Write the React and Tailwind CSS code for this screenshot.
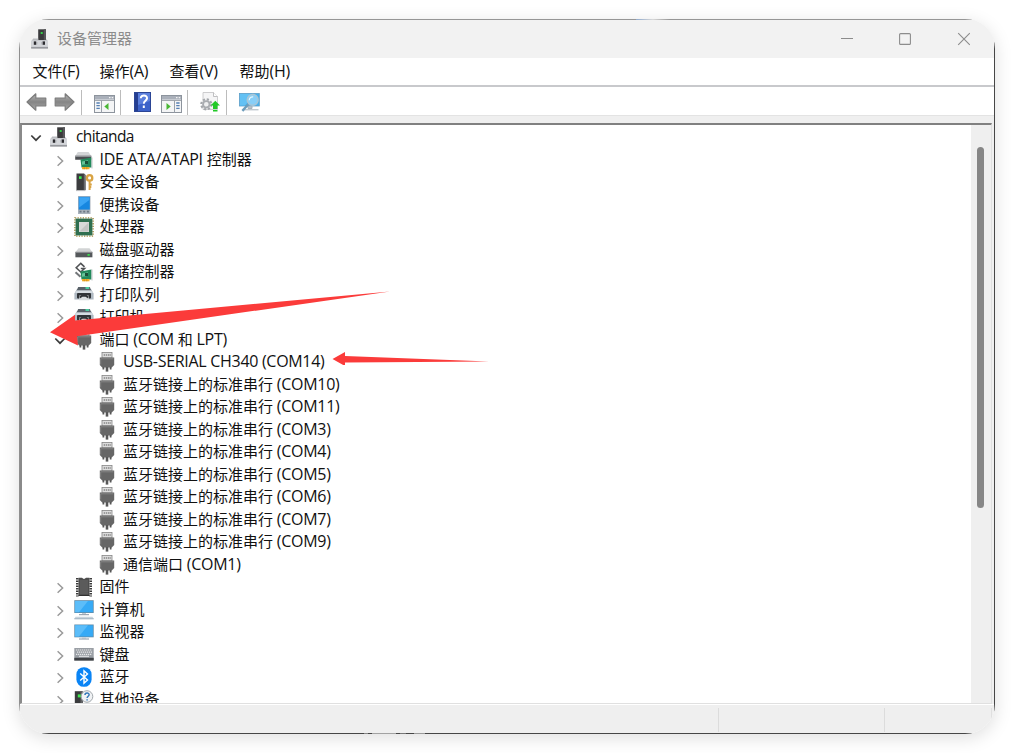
import React from 'react';

const Svg = ({ w = 20, h = 20, children }) => (
  <svg width={w} height={h} viewBox={`0 0 ${w} ${h}`} className="block shrink-0">{children}</svg>
);

const Machine = () => (
  <Svg>
    <rect x="8.2" y="0.3" width="7.8" height="11" fill="#3b3b3d" />
    <rect x="13.8" y="0.3" width="2.2" height="11" fill="#58585b" />
    <rect x="10.7" y="3" width="2" height="2" fill="#35d04a" />
    <path d="M3.2 9.5H8.2V11H16V9.8L18 12.5V19.5H1.2V12.5Z" fill="#b9bbbf" />
    <path d="M1.2 11.5H18V17.8H1.2Z" fill="#d4d6da" />
    <path d="M1.2 17.9H18V19.5H1.2Z" fill="#97999e" />
    <rect x="3.8" y="12.4" width="2.4" height="3.4" fill="#2c2c30" />
    <rect x="12.6" y="12.4" width="2.4" height="3.4" fill="#2c2c30" />
    <path d="M6.8 13V15.5M11.9 13V15.5" stroke="#9a9ca0" strokeWidth=".8" />
  </Svg>
);

const Card = () => (
  <g>
    <path d="M6.5 9.5L17.5 7.5V17.5H7.5Z" fill="#238a5c" />
    <path d="M18 7.5V18.5" stroke="#c3c6c8" strokeWidth="1" />
    <path d="M8 11.5L14 10.2V14L8 14.8Z" fill="#66c39a" />
    <rect x="11" y="11" width="3" height="3" fill="#1b4e38" />
    <path d="M8 17H15.5V19.3H8Z" fill="#f2ae2d" />
    <path d="M10.2 17.2V19.3M12.8 17.2V19.3" stroke="#c97f10" strokeWidth=".7" />
  </g>
);

const Ide = () => (
  <Svg>
    <path d="M3.8 2H14.5L17.3 6H1.2Z" fill="#d3d5d7" />
    <path d="M1.2 5.8H17.3V9.8H1.2Z" fill="#4c4e52" />
    <path d="M1.2 6.2H17.3" stroke="#aeb0b4" strokeWidth="1" />
    <Card />
  </Svg>
);

const Security = () => (
  <Svg>
    <path d="M2.5 1.5H10L11.5 3V18H2.5Z" fill="#3b3c3e" />
    <path d="M9.8 1.5L11.5 3V18H9.8Z" fill="#6b6d70" />
    <rect x="5" y="4.3" width="2.6" height="2.6" fill="#3df052" />
    <circle cx="15.6" cy="5.9" r="2.7" fill="#fff" stroke="#d9a445" strokeWidth="2.3" />
    <path d="M15.6 9V18M15.6 12.5H17.8M15.6 15H17.3" stroke="#d9a445" strokeWidth="2" />
    <path d="M2 18.6H11.5" stroke="#b5b7ba" />
  </Svg>
);

const Portable = () => (
  <Svg>
    <rect x="4" y="1" width="12.5" height="18" fill="#a9b2bc" />
    <rect x="4.7" y="1.8" width="11.1" height="12.8" fill="#1787e0" />
    <path d="M5.2 2.3H15.3V5L5.2 12.5Z" fill="#3ca5f4" />
    <path d="M5.5 16.6H7.5M9.2 16.6H11.2M12.9 16.6H14.9" stroke="#6d7885" strokeWidth="1.6" />
  </Svg>
);

const Cpu = () => (
  <Svg>
    <rect x="0.9" y="0.9" width="18.2" height="18.2" fill="none" stroke="#a58a3f" strokeWidth="1.4" strokeDasharray="1.3 1.3" />
    <rect x="1.6" y="1.6" width="16.8" height="16.8" fill="#2f6f50" />
    <rect x="5" y="5" width="10" height="10" fill="#d9dad9" />
    <path d="M5.5 14.5L14.5 5.5V14.5Z" fill="#c3c5c4" />
  </Svg>
);

const Disk = () => (
  <Svg>
    <path d="M4.5 8.3H15.5L18.2 12H1.6Z" fill="#d2d4d5" />
    <rect x="1.4" y="12" width="17" height="5.3" fill="#55585b" />
    <path d="M1.4 12.2H18.4" stroke="#a0a3a6" />
    <rect x="13.5" y="14" width="2.2" height="1.8" fill="#3be04d" />
  </Svg>
);

const Storage = () => (
  <Svg>
    <path d="M10.5 4.8L6.8 1.3L2.2 5.8L6.8 10L10.5 6.5H6.8" fill="none" stroke="#505255" strokeWidth="1.6" />
    <path d="M1.5 10.2L6.5 14.8" fill="none" stroke="#74777a" strokeWidth="2" />
    <Card />
  </Svg>
);

const Printer = () => (
  <Svg>
    <path d="M3 4H17L19.6 8.5V14.5H0.4V8.5Z" fill="#aeb8c1" />
    <path d="M4.2 2H15.8L17.3 5.5H2.7Z" fill="#596169" />
    <path d="M2.7 5.5H17.3L19 8H1Z" fill="#d5dce2" />
    <path d="M11.5 3H15.2" stroke="#49d7a4" strokeWidth="1.8" />
    <rect x="3" y="8" width="14" height="5.5" rx="1" fill="#303438" />
    <path d="M5.7 10H14.3L15.2 15.3H4.8Z" fill="#d8dde0" />
    <path d="M5.8 10.8L8 9.8H12L14.2 10.8V13.5L11.5 11.8H8.5L5.8 13.5Z" fill="#303438" />
  </Svg>
);

const Port = () => (
  <Svg>
    <rect x="5" y="0.5" width="10" height="5.5" fill="#dcdcdc" stroke="#858585" strokeWidth=".8" />
    <path d="M7.3 2V4M9.3 2V4M11.3 2V4M13.1 2V4" stroke="#777" strokeWidth=".8" />
    <path d="M2.8 5.6H17.2V13L14.8 15.4H5.2L2.8 13Z" fill="#666" />
    <path d="M3.5 6.8H16.5M3.7 7V12.5" stroke="#858585" strokeWidth="1" />
    <path d="M6.4 15V17.6M13.6 15V17.6" stroke="#575757" strokeWidth="1.8" />
    <path d="M10 15V19.6" stroke="#575757" strokeWidth="2.6" />
  </Svg>
);

const Firmware = () => (
  <Svg>
    <path d="M3.3 1V19.5M16.7 1V19.5" stroke="#3c3c3c" strokeWidth="2.6" strokeDasharray="1.5 1" />
    <path d="M4.5 0.8H8Q10 3 12 0.8H15.5V19H4.5Z" fill="#4d4d4d" />
    <path d="M6 3H14V17.5H6Z" fill="#5b5b5b" />
    <path d="M4.5 18.4H15.5" stroke="#2f2f2f" />
  </Svg>
);

const Screen = ({ y }) => (
  <g>
    <rect x="0.3" y={y} width="19.4" height="12.8" fill="#5f8ba8" />
    <rect x="1.1" y={y + 0.8} width="17.8" height="11.2" fill="#36aaf6" />
    <path d={`M1.1 ${y + 0.8}H14L5 ${y + 12}H1.1Z`} fill="#5cbdf9" />
    <path d={`M8 ${y + 12.8}H12V${y + 14}H8Z`} fill="#c3ccd4" />
    <path d={`M5 ${y + 14.5}H15`} stroke="#8796a4" strokeWidth="1" />
  </g>
);

const Computer = () => (
  <Svg>
    <Screen y={0.2} />
    <path d="M1.5 16.7H18.5L19.7 18.7H0.3Z" fill="#c8d3dc" />
    <path d="M0.3 18.8H19.7" stroke="#8ba1b3" strokeWidth=".8" />
  </Svg>
);

const Monitor = () => <Svg><Screen y={2.5} /></Svg>;

const Keyboard = () => (
  <Svg>
    <rect x="0.3" y="3" width="19.4" height="12.4" fill="#9a9fa5" />
    <rect x="0.3" y="12.8" width="19.4" height="2.8" fill="#3e4145" />
    <path d="M2 5H18M3 7.2H18M2 9.4H18" stroke="#e6e8ea" strokeWidth="1.2" strokeDasharray="1.3 .7" />
    <path d="M5 11.3H15" stroke="#e6e8ea" strokeWidth="1" />
  </Svg>
);

const Bluetooth = () => (
  <Svg>
    <rect x="2.4" y="0.2" width="15.2" height="19.6" rx="7.4" fill="#0a84f5" />
    <path d="M6.2 6.5L13.5 13L10 16.2V3.8L13.5 7L6.2 13.5" fill="none" stroke="#fff" strokeWidth="1.4" />
  </Svg>
);

const Unknown = () => (
  <Svg>
    <path d="M0.8 1.2H8V13H0.8Z" fill="#3a3b3d" />
    <path d="M6.5 1.2H9V13H6.5Z" fill="#606265" />
    <rect x="3.8" y="4.4" width="3" height="3" fill="#41e750" />
    <circle cx="13" cy="6.5" r="5.8" fill="#f0f2f4" stroke="#a2a8ad" strokeWidth="1" />
    <path d="M11 5.1C11 2.4 15.2 2.5 15.1 4.8C15 6.3 13.1 6.3 13.1 8.1M13.1 9.2V10.5" fill="none" stroke="#3478b8" strokeWidth="1.5" />
  </Svg>
);

const Arrow = ({ flip }) => (
  <svg width="21" height="20" viewBox="0 0 21 20" className={flip ? 'block -scale-x-100' : 'block'}>
    <defs>
      <linearGradient id={flip ? 'ga' : 'gb'} x1="0" y1="0" x2="0" y2="1">
        <stop offset="0" stopColor="#b5b5b5" />
        <stop offset=".5" stopColor="#858585" />
        <stop offset="1" stopColor="#a8a8a8" />
      </linearGradient>
    </defs>
    <path d="M1 10L9.8 1.8V6.2H19.8V13.8H9.8V18.2Z" fill={`url(#${flip ? 'ga' : 'gb'})`} stroke="#7d7d7d" strokeWidth="1.2" strokeLinejoin="round" />
  </svg>
);

const Pane = ({ right }) => (
  <svg width="21" height="18" viewBox="0 0 21 18" className="block">
    <rect x="0.5" y="0.5" width="20" height="17" fill="#f4f5f6" stroke="#8d949d" />
    <rect x="1" y="1" width="19" height="3.6" fill="#aab0ba" />
    <path d="M15 2.6H16.5M17.7 2.6H19.2" stroke="#f4f4f4" strokeWidth="1.2" />
    <path d="M1 5.5H20" stroke="#8d949d" strokeWidth=".8" />
    {right ? (
      <g>
        <path d="M13.5 5.5V17.5" stroke="#9aa1aa" />
        <path d="M15.2 8H18.6M15.2 10.7H18.6M15.2 13.4H18.6" stroke="#5580b4" strokeWidth="1.3" />
        <path d="M5.5 8L9.7 11.4L5.5 15Z" fill="#49b735" />
      </g>
    ) : (
      <g>
        <path d="M7.5 5.5V17.5" stroke="#9aa1aa" />
        <path d="M2.4 8H5.8M2.4 10.7H5.8M2.4 13.4H5.8" stroke="#5580b4" strokeWidth="1.3" />
        <path d="M14.5 8L10.3 11.4L14.5 15Z" fill="#49b735" />
      </g>
    )}
  </svg>
);

const Help = () => (
  <svg width="17" height="20" viewBox="0 0 17 20" className="block">
    <rect x="0.5" y="0.5" width="16" height="19" fill="#3c62c9" stroke="#2b4595" />
    <path d="M1 1H4V19H1Z" fill="#253e91" />
    <path d="M4 1H16V9L4 13Z" fill="#5b7fdc" />
    <path d="M6.8 6.2C6.8 2.4 13.3 2.7 13 6.4C12.8 9 9.8 8.8 9.8 11.8M9.8 13.6V16" fill="none" stroke="#fff" strokeWidth="2" />
  </svg>
);

const Update = () => (
  <svg width="20" height="20" viewBox="0 0 20 20" className="block">
    <path d="M3 0.5H13.5L17.5 4.5V17.5H3Z" fill="#f5f5f6" stroke="#c2c2c4" strokeWidth=".8" />
    <path d="M13.5 0.5V4.5H17.5" fill="#fff" stroke="#b0b0b3" strokeWidth=".8" />
    <circle cx="6.3" cy="12.3" r="5" fill="none" stroke="#a4a7ab" strokeWidth="2.2" strokeDasharray="2.2 1.7" />
    <circle cx="6.3" cy="12.3" r="3.2" fill="#eeeff0" stroke="#a9acb0" strokeWidth="1.8" />
    <path d="M15.3 8.8L20 13.4H17.5V17H13V13.4H10.5Z" fill="#22c928" />
    <path d="M13 18.7H17.5" stroke="#22c928" strokeWidth="1.5" />
  </svg>
);

const Scan = () => (
  <svg width="21" height="20" viewBox="0 0 21 20" className="block">
    <rect x="0.5" y="1.5" width="19.8" height="12.5" fill="#45b0ee" stroke="#5d9fc7" strokeWidth=".8" />
    <path d="M1 2H15L6 13.5H1Z" fill="#63c1f4" />
    <path d="M9 14H13V16.5H9ZM5 17.8H19.5" fill="#b8c2ca" stroke="#a7b2bb" strokeWidth="1" />
    <path d="M10 11.5L3.4 18.9" stroke="#6d9dbb" strokeWidth="2.4" />
    <circle cx="13.7" cy="7.9" r="5.4" fill="#8fd2f7" fillOpacity=".9" stroke="#a9c6d6" strokeWidth="1.5" />
    <path d="M10.2 8.2C10.4 5.8 12.2 4.7 14.2 4.9" fill="none" stroke="#e3f6ff" strokeWidth="1.2" />
  </svg>
);

const rows = [
  [0, 'open', Machine, 'chitanda'],
  [1, 'closed', Ide, 'IDE ATA/ATAPI 控制器'],
  [1, 'closed', Security, '安全设备'],
  [1, 'closed', Portable, '便携设备'],
  [1, 'closed', Cpu, '处理器'],
  [1, 'closed', Disk, '磁盘驱动器'],
  [1, 'closed', Storage, '存储控制器'],
  [1, 'closed', Printer, '打印队列'],
  [1, 'closed', Printer, '打印机'],
  [1, 'open', Port, '端口 (COM 和 LPT)'],
  [2, '', Port, 'USB-SERIAL CH340 (COM14)'],
  [2, '', Port, '蓝牙链接上的标准串行 (COM10)'],
  [2, '', Port, '蓝牙链接上的标准串行 (COM11)'],
  [2, '', Port, '蓝牙链接上的标准串行 (COM3)'],
  [2, '', Port, '蓝牙链接上的标准串行 (COM4)'],
  [2, '', Port, '蓝牙链接上的标准串行 (COM5)'],
  [2, '', Port, '蓝牙链接上的标准串行 (COM6)'],
  [2, '', Port, '蓝牙链接上的标准串行 (COM7)'],
  [2, '', Port, '蓝牙链接上的标准串行 (COM9)'],
  [2, '', Port, '通信端口 (COM1)'],
  [1, 'closed', Firmware, '固件'],
  [1, 'closed', Computer, '计算机'],
  [1, 'closed', Monitor, '监视器'],
  [1, 'closed', Keyboard, '键盘'],
  [1, 'closed', Bluetooth, '蓝牙'],
  [1, 'closed', Unknown, '其他设备'],
];

// Latin runs are set slightly larger and tighter than the 15px CJK glyphs.
const runClass = (run) => {
  if (/[\u4e00-\u9fff]/.test(run)) return '';
  if (/^[a-z]+$/.test(run)) return 'text-[15.5px] tracking-[-0.6px]';
  return 'text-base leading-[22px] tracking-[-0.3px]';
};

const Label = ({ text }) => (
  <span className="block whitespace-pre leading-[22px]">
    {text.split(/([\u4e00-\u9fff]+)/).filter(Boolean).map((run, i) => (
      <span key={i} className={runClass(run)}>{run}</span>
    ))}
  </span>
);

const Twisty = ({ state }) => (
  <svg width="12" height="12" viewBox="0 0 12 12" className="mt-0.5 block shrink-0">
    {state === 'open' && <path d="M1.3 3.5L6 8.2L10.7 3.5" fill="none" stroke="#3c3c3c" strokeWidth="1.7" />}
    {state === 'closed' && <path d="M3.6 1.3L8.6 6L3.6 10.7" fill="none" stroke="#9a9a9a" strokeWidth="1.5" />}
  </svg>
);

const indent = ['pl-2', 'pl-8', 'pl-14'];

const Row = ({ level, state, Icon, text }) => (
  <div className={`flex h-[22.5px] shrink-0 items-center ${indent[level]}`}>
    <Twisty state={state} />
    <div className={level === 1 ? 'ml-2' : 'ml-[7px]'}><Icon /></div>
    <div className={level === 0 ? 'mb-0.5 ml-[7px]' : level === 1 ? 'mb-0.5 ml-[5.5px]' : 'mb-0.5 ml-1.5'}><Label text={text} /></div>
  </div>
);

const Sep = () => <div className="h-[25px] w-px bg-[#bcbcbc]" />;

export default function App() {
  return (
    <div className="relative h-[753px] w-[1014px] overflow-hidden bg-white pl-[19px] pt-[19px] font-['Open_Sans','Noto_Sans_CJK_SC',sans-serif] text-[15px] leading-[22px] text-[#111]">
      <div className="h-[715px] w-[976px] rounded-[30px] shadow-[0_4px_18px_rgba(0,0,0,0.13)]">
        <div className="h-full overflow-hidden rounded-[30px]">
          <div className="flex h-full flex-col border border-t-[#969696] border-r-[#464646] border-b-[#464646] border-l-[#8f8f8f] bg-[#efefef]">
            <div className="flex h-[38px] shrink-0 items-center bg-[#f2f2f2] pl-2.5 text-[#8c8c8c]">
              <Machine />
              <span className="mb-[3px] ml-[7px]">设备管理器</span>
              <svg width="130" height="14" viewBox="0 0 130 14" className="ml-auto mr-[23px] block" fill="none" stroke="#8c8c8c" strokeWidth="1.1">
                <path d="M0 6.5H12" />
                <rect x="58.6" y="1.6" width="10.8" height="10.8" rx="1" />
                <path d="M117.2 1.2L128.8 12.8M128.8 1.2L117.2 12.8" />
              </svg>
            </div>
            <div className="flex h-[29px] shrink-0 items-center border-b-2 border-[#c8c9cc] bg-white pb-0.5 pl-[12.5px]">
              <div className="w-[67px]"><Label text="文件(F)" /></div>
              <div className="w-[70px]"><Label text="操作(A)" /></div>
              <div className="w-[70px]"><Label text="查看(V)" /></div>
              <div><Label text="帮助(H)" /></div>
            </div>
            <div className="flex h-[29px] shrink-0 items-center border-b border-[#e3e3e3] bg-white pl-[5.5px] pt-0.5">
              <Arrow />
              <div className="ml-[7.5px] mr-1.5"><Arrow flip /></div>
              <Sep />
              <div className="ml-[11.5px] mr-[5.5px] mt-1"><Pane /></div>
              <Sep />
              <div className="ml-[13px] mr-2.5"><Help /></div>
              <div className="mr-[5px] mt-1"><Pane right /></div>
              <Sep />
              <div className="ml-3 mr-1.5"><Update /></div>
              <Sep />
              <div className="ml-[11.5px]"><Scan /></div>
            </div>
            <div className="mr-0.5 mt-[7px] flex h-[581px] shrink-0 border-b border-l-2 border-r border-t-2 border-b-[#e0e0e0] border-l-[#8a8a8a] border-r-[#e0e0e0] border-t-[#808080] bg-white">
              <div className="flex min-w-0 grow flex-col overflow-hidden pt-[0.75px]">
                {rows.map(([level, state, Icon, text]) => (
                  <Row key={text + level} level={level} state={state} Icon={Icon} text={text} />
                ))}
              </div>
              <div className="flex w-5 shrink-0 justify-start bg-[#efefef] pl-1.5 pt-[22px]">
                <div className="h-[361px] w-[7px] rounded-sm bg-[#868686]" />
              </div>
            </div>
            <div className="flex grow flex-col border-t border-white pt-[3px] pb-px">
              <div className="flex grow justify-end">
                <div className="w-[166px] border-l border-[#dcdcdc]" />
                <div className="w-[107px] border-l border-[#dcdcdc]" />
                <div className="w-[3px] border-l border-[#e0e0e0]" />
              </div>
            </div>
          </div>
        </div>
      </div>
      <div className="absolute left-[636px] top-[19px] h-px w-[34px] bg-linear-to-r from-[#8fa9cc] via-[#d8d8d8] to-[#969696]" />
      <div className="absolute left-[364px] top-[733px] flex h-px gap-1">
        <div className="w-1 bg-[#888]" />
        <div className="w-[24px] bg-[#a2a2a2]" />
        <div className="w-1.5 bg-[#777]" />
        <div className="ml-1 w-[11px] bg-[#999]" />
      </div>
      <svg width="440" height="75" viewBox="50 290 440 75" className="pointer-events-none absolute left-[50px] top-[290px]" fill="#fb3b3a">
        <path d="M50 332.3L75 314.7V320.6L390 291.4L77 336.3L78 345.5Z" />
        <path d="M332.5 359L345 352V356L489 361.5L345 362.5V366Z" />
      </svg>
    </div>
  );
}
